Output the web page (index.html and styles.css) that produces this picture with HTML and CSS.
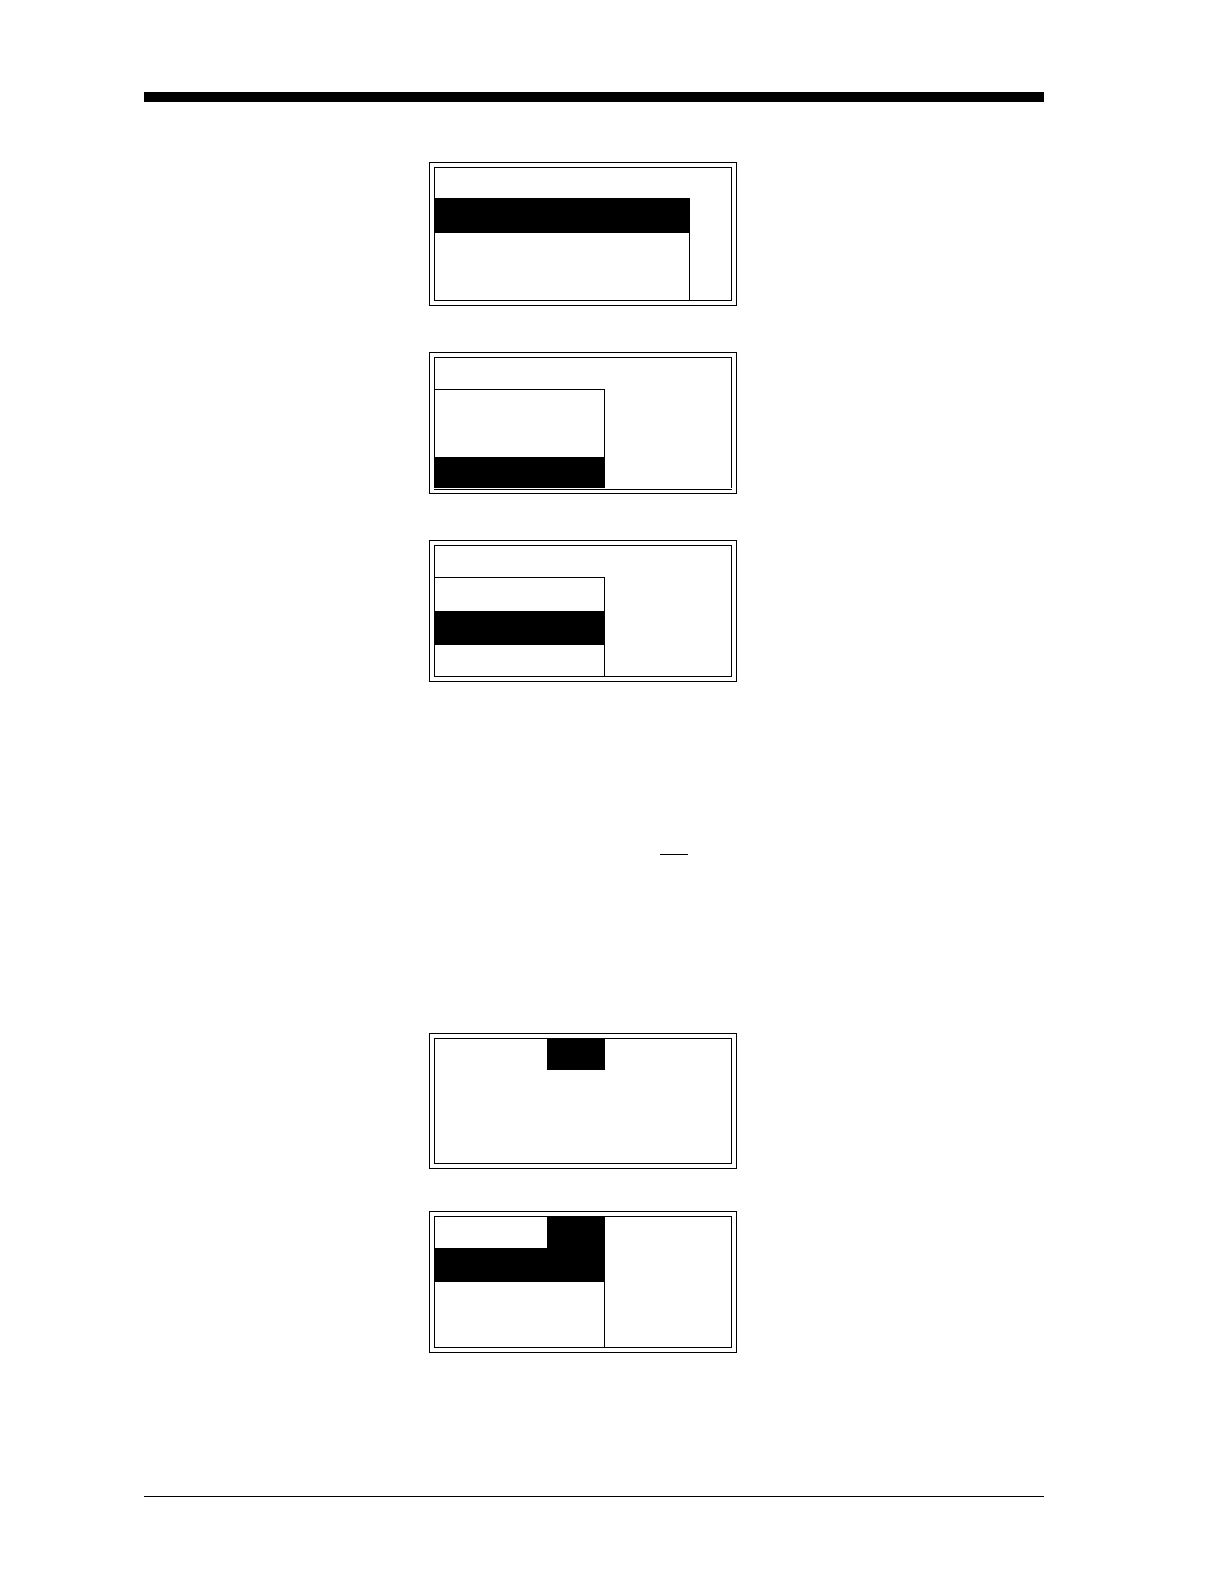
FILE: index.html
```html
<!DOCTYPE html>
<html lang="en">
<head>
<meta charset="utf-8">
<meta name="viewport" content="width=device-width, initial-scale=1">
<title>Display menus</title>
<link rel="stylesheet" href="styles.css">
</head>
<body>
<div class="page">
  <header class="page-rule"></header>
  <main class="content">
    <section class="group">
      <div class="display">
        <div class="screen">
          <div class="titlebar titlebar-short"></div>
          <div class="menu menu-wide">
            <div class="item item-tall selected"></div>
            <div class="item item-double"></div>
          </div>
        </div>
      </div>
      <div class="display display-split">
        <div class="screen screen-open">
          <div class="titlebar"></div>
          <div class="menu menu-lined">
            <div class="item item-double"></div>
            <div class="item item-last selected"></div>
          </div>
        </div>
        <div class="screen-base"></div>
      </div>
      <div class="display">
        <div class="screen">
          <div class="titlebar"></div>
          <div class="menu menu-lined">
            <div class="item item-first"></div>
            <div class="item selected"></div>
            <div class="item item-last"></div>
          </div>
        </div>
      </div>
    </section>
    <hr class="underline">
    <section class="group group-lower">
      <div class="display">
        <div class="screen screen-empty">
          <div class="titlebar"><div class="tab selected"></div></div>
        </div>
      </div>
      <div class="display">
        <div class="screen">
          <div class="titlebar"><div class="tab selected"></div></div>
          <div class="menu">
            <div class="item selected"></div>
            <div class="item item-rest"></div>
          </div>
        </div>
      </div>
    </section>
  </main>
  <footer class="footer-rule"></footer>
</div>
</body>
</html>
```
FILE: styles.css
```css
* {
  box-sizing: border-box;
}

body {
  margin: 0;
  background: #fff;
  color: #000;
  font-family: "Liberation Sans", sans-serif;
}

.page {
  padding: 92px 180px 87px 144px;
}

.page-rule {
  height: 10px;
  background: #000;
}

.content {
  padding: 60px 0 143px 285px;
}

.group {
  display: flex;
  flex-direction: column;
  gap: 46px;
}

.group-lower {
  gap: 42px;
}

/* Double-framed instrument display */
.display {
  width: 308px;
  padding: 4px;
  border: 1px solid #000;
}

.display-split {
  padding-bottom: 3px;
}

.screen {
  border: 1px solid #000;
}

.screen-open {
  border-bottom: 0;
}

.screen-base {
  height: 1px;
  margin-top: 1px;
  background: #000;
}

.screen-empty {
  min-height: 126px;
}

.titlebar {
  display: flex;
  height: 31px;
  padding-left: 112px;
}

.titlebar-short {
  height: 30px;
}

.tab {
  width: 58px;
}

.menu {
  width: 170px;
  border-right: 1px solid #000;
}

.menu-wide {
  width: 255px;
}

.menu-lined {
  border-top: 1px solid #000;
}

.item {
  height: 34px;
}

.item-first {
  height: 33px;
}

.item-last {
  height: 31px;
}

.item-tall {
  height: 35px;
}

.item-double {
  height: 67px;
}

.item-rest {
  height: 65px;
}

.selected {
  background: #000;
}

.underline {
  width: 28px;
  height: 1px;
  margin: 172px 0 178px 231px;
  border: 0;
  background: #000;
}

.footer-rule {
  height: 1px;
  background: #000;
}
```
